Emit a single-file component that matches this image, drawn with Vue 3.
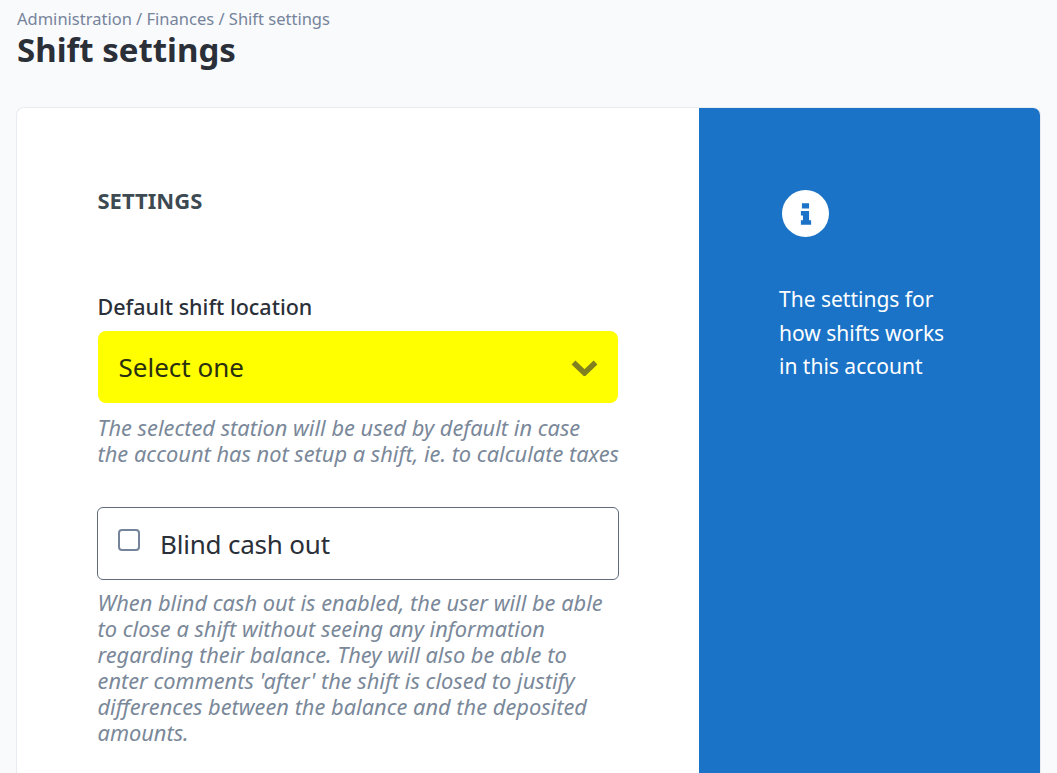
<script setup>
const crumbs = 'Administration / Finances / Shift settings'
const sideLines = ['The settings for', 'how shifts works', 'in this account']
</script>

<template>
  <div class="page">
    <div class="crumbs">{{ crumbs }}</div>
    <h1 class="title">Shift settings</h1>
    <div class="card">
      <div class="main">
        <h2 class="section">SETTINGS</h2>
        <label class="label">Default shift location</label>
        <div class="select">
          <span>Select one</span>
          <svg class="chev" width="27" height="18" viewBox="0 0 27 18"><path d="M2.500 4.500l11 10.500 11-10.500" fill="none" stroke="#808020" stroke-width="5.500"/></svg>
        </div>
        <p class="help help-one">The selected station will be used by default in case<br>the account has not setup a shift, ie. to calculate taxes</p>
        <div class="check">
          <span class="box"></span>
          <span>Blind cash out</span>
        </div>
        <p class="help">When blind cash out is enabled, the user will be able<br>to close a shift without seeing any information<br>regarding their balance. They will also be able to<br>enter comments 'after' the shift is closed to justify<br>differences between the balance and the deposited<br>amounts.</p>
      </div>
      <aside class="side">
        <svg class="info" width="47" height="47" viewBox="0 0 46 46">
          <circle cx="23" cy="23" r="23" fill="#fff"/>
          <path d="M19.500 13h7v5h-7zM18.500 20.500h8v9h2v4.500h-10v-4.500h2v-4.500h-2z" fill="#1a73c7"/>
        </svg>
        <p class="side-text"><span v-for="l in sideLines" :key="l" class="side-line">{{ l }}</span></p>
      </aside>
    </div>
  </div>
</template>

<style>
html, body { margin: 0; background: #f9fafc; overflow: hidden; }
</style>

<style scoped>
.page {
  height: 773px;
  box-sizing: border-box;
  overflow: hidden;
  padding: 8px 17px 0;
  font-family: "Noto Sans", "Open Sans", sans-serif;
  color: #2a2f38;
}
.crumbs { font-size: 16.500px; line-height: 21px; color: #76849b; }
.title { margin: 0 0 38px; font-size: 33px; line-height: 41px; font-weight: 700; color: #2a2f38; }
.card {
  display: flex;
  width: 1023px;
  height: 700px;
  background: #fff;
  border-radius: 7px;
  overflow: hidden;
  box-shadow: 0 0 0 1px #e8ebf0;
}
.main { width: 682px; box-sizing: border-box; padding: 79px 81px 0 80.500px; }
.section { margin: 0 0 80px; font-size: 22px; line-height: 27px; font-weight: 700; color: #3d4a52; }
.label { display: block; font-size: 21.500px; line-height: 26px; font-weight: 500; color: #2a2f38; margin-bottom: 11px; }
.select {
  height: 72px;
  background: #ffff00;
  border-radius: 8px;
  padding: 0 20px 0 21px;
  display: flex;
  align-items: center;
  justify-content: space-between;
  font-size: 26px;
  color: #2a2f10;
}
.help { margin: 0; font-size: 21.800px; line-height: 26px; font-style: italic; color: #7a8899; white-space: nowrap; }
.help-one { margin: 12px 0 40px; }
.check {
  height: 71px;
  border: 1px solid #5f6b7a;
  border-radius: 6px;
  display: flex;
  align-items: center;
  gap: 20px;
  padding-left: 20px;
  margin: 0 -0.500px 10px;
  font-size: 26px;
  letter-spacing: -0.2px;
}
.box { width: 22px; height: 22px; box-sizing: border-box; border: 2px solid #76849b; border-radius: 4px; margin-top: -7px; }
.side { flex: 1; background: #1a73c7; padding: 82px 0 0 80px; color: #fff; }
.info { display: block; margin-left: 3px; }
.side-text { margin: 46px 0 0; font-size: 21px; line-height: 33.500px; }
.side-line { display: block; }
</style>
